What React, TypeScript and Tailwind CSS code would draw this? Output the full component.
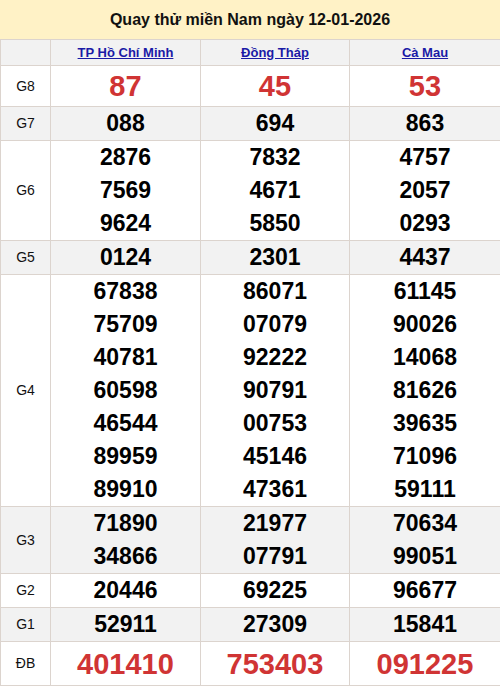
import React from "react";

const cols = ["TP Hồ Chí Minh", "Đồng Tháp", "Cà Mau"];

type Row = { label: string; vals: string[][]; red?: boolean; grey?: boolean; h?: string };

const rows: Row[] = [
  { label: "G8", vals: [["87"], ["45"], ["53"]], red: true, h: "h-[41px]" },
  { label: "G7", vals: [["088"], ["694"], ["863"]], grey: true },
  { label: "G6", vals: [["2876", "7569", "9624"], ["7832", "4671", "5850"], ["4757", "2057", "0293"]] },
  { label: "G5", vals: [["0124"], ["2301"], ["4437"]], grey: true },
  {
    label: "G4",
    vals: [
      ["67838", "75709", "40781", "60598", "46544", "89959", "89910"],
      ["86071", "07079", "92222", "90791", "00753", "45146", "47361"],
      ["61145", "90026", "14068", "81626", "39635", "71096", "59111"],
    ],
  },
  { label: "G3", vals: [["71890", "34866"], ["21977", "07791"], ["70634", "99051"]], grey: true },
  { label: "G2", vals: [["20446"], ["69225"], ["96677"]] },
  { label: "G1", vals: [["52911"], ["27309"], ["15841"]], grey: true },
  { label: "ĐB", vals: [["401410"], ["753403"], ["091225"]], red: true, h: "h-[44px]" },
];

export default function App() {
  return (
    <div className="w-[500px] bg-white" style={{ fontFamily: '"Liberation Sans", Arial, sans-serif' }}>
      <div className="h-[39px] bg-[#fff2c6] flex items-center justify-center text-[16px] font-bold text-[#111]">
        Quay thử miền Nam ngày 12-01-2026
      </div>
      <table className="w-[500px] border-collapse table-fixed">
        <colgroup>
          <col className="w-[50px]" />
          <col className="w-[150px]" />
          <col className="w-[149px]" />
          <col className="w-[151px]" />
        </colgroup>
        <thead>
          <tr className="bg-[#f2f2f2] h-[26px]">
            <th className="border border-[#dcd4ce]"></th>
            {cols.map((c) => (
              <th key={c} className="border border-[#dcd4ce] text-[13px] font-bold p-0">
                <span className="text-[#1a1aa6] underline">{c}</span>
              </th>
            ))}
          </tr>
        </thead>
        <tbody>
          {rows.map((r) => (
            <tr key={r.label} className={`${r.grey ? "bg-[#f2f2f2]" : "bg-white"} ${r.h ?? ""}`}>
              <td className="border border-[#dcd4ce] text-center text-[14px] text-[#111] p-0">{r.label}</td>
              {r.vals.map((v, i) => (
                <td key={i} className="border border-[#dcd4ce] text-center p-0 align-middle">
                  {v.map((n, j) =>
                    r.red ? (
                      <div key={j} className="text-[29px] leading-[40px] font-bold text-[#d03434]">
                        {n}
                      </div>
                    ) : (
                      <div key={j} className="text-[23px] leading-[33px] font-bold text-black">
                        {n}
                      </div>
                    )
                  )}
                </td>
              ))}
            </tr>
          ))}
        </tbody>
      </table>
    </div>
  );
}
